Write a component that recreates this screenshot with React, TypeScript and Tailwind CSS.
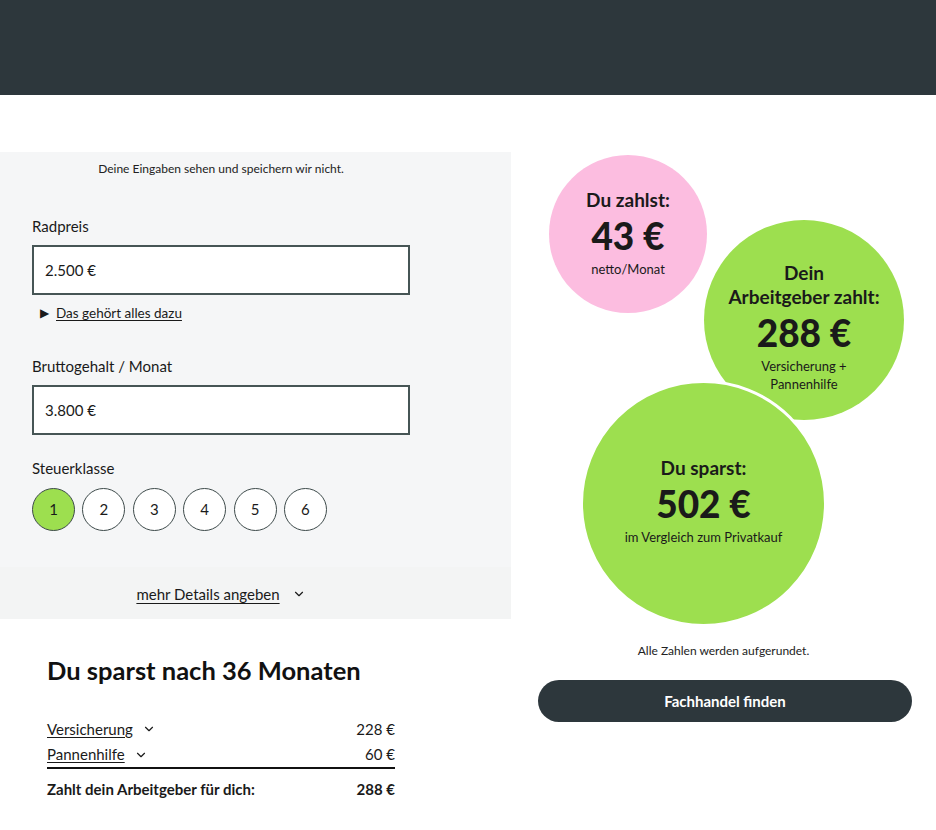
import { ChevronDown } from "lucide-react";

const font = { fontFamily: "Lato, 'Noto Sans', sans-serif" };

function Field({ label, value }: { label: string; value: string }) {
  return (
    <div>
      <div className="text-[15px] leading-5 text-[#1a1a1a]">{label}</div>
      <div className="mt-[9px] h-[50px] border-2 border-[#465555] bg-white flex items-center px-[11px] text-[15px] text-[#1a1a1a]">
        {value}
      </div>
    </div>
  );
}

function Bubble({
  title,
  amount,
  note,
}: {
  title: React.ReactNode;
  amount: string;
  note: React.ReactNode;
}) {
  return (
    <>
      <div className="text-[19px] leading-6 font-bold text-[#1a1a1a]">{title}</div>
      <div className="text-[37px] leading-[44px] font-black text-[#1a1a1a] mt-[2px]">{amount}</div>
      <div className="text-[13px] leading-[18px] text-[#1a1a1a] mt-[2px]">{note}</div>
    </>
  );
}

export default function App() {
  const classes = [1, 2, 3, 4, 5, 6];
  return (
    <div style={font} className="w-[936px] min-h-[830px] bg-white text-[#1a1a1a]">
      <div className="h-[95px] bg-[#2d373c]" />
      <div className="flex pt-[57px]">
        <div className="w-[511px]">
          <div className="bg-[#f5f6f7]">
            <div className="px-8 w-[442px] pt-[9px]">
              <p className="text-center text-[12px] leading-4 text-[#222]">
                Deine Eingaben sehen und speichern wir nicht.
              </p>
              <div className="mt-[39px]">
                <Field label="Radpreis" value="2.500 €" />
              </div>
              <div className="mt-[10px] flex items-center pl-[8px] text-[13.5px] leading-4">
                <span className="text-[12px] mr-[7px]">▶</span>
                <span className="underline underline-offset-2">Das gehört alles dazu</span>
              </div>
              <div className="mt-[35px]">
                <Field label="Bruttogehalt / Monat" value="3.800 €" />
              </div>
              <div className="mt-[23px] text-[15px] leading-5">Steuerklasse</div>
              <div className="mt-[10px] flex gap-[7.4px]">
                {classes.map((n) => (
                  <div
                    key={n}
                    className={
                      n === 1
                        ? "w-[43px] h-[43px] rounded-full border-[1.5px] border-[#3d4a4a] bg-[#9ddf4f] flex items-center justify-center text-[15px]"
                        : "w-[43px] h-[43px] rounded-full border-[1.5px] border-[#3d4a4a] bg-white flex items-center justify-center text-[15px]"
                    }
                  >
                    {n}
                  </div>
                ))}
              </div>
              <div className="h-[36px]" />
            </div>
            <div className="h-[52px] bg-[#f3f4f4] px-8 w-[511px]">
              <div className="w-[378px] h-full flex items-center justify-center gap-[12px] pt-[2px] text-[15px]">
                <span className="underline underline-offset-[3px]">mehr Details angeben</span>
                <ChevronDown size={14} strokeWidth={2} />
              </div>
            </div>
          </div>
          <div className="ml-[47px] w-[348px]">
            <h2 className="mt-[35px] text-[25.5px] leading-8 font-bold text-[#111]">
              Du sparst nach 36 Monaten
            </h2>
            <div className="mt-[30px] flex flex-col text-[15px]">
              <div className="flex justify-between items-center h-[26px]">
                <span className="flex items-center gap-[9px]">
                  <span className="underline underline-offset-2">Versicherung</span>
                  <ChevronDown size={14} strokeWidth={2} />
                </span>
                <span>228 €</span>
              </div>
              <div className="flex justify-between items-center h-[25px]">
                <span className="flex items-center gap-[9px]">
                  <span className="underline underline-offset-2">Pannenhilfe</span>
                  <ChevronDown size={14} strokeWidth={2} />
                </span>
                <span>60 €</span>
              </div>
              <div className="h-[2px] bg-[#111]" />
              <div className="flex justify-between items-center h-[40px] font-bold">
                <span>Zahlt dein Arbeitgeber für dich:</span>
                <span>288 €</span>
              </div>
            </div>
          </div>
        </div>
        <div className="flex-1">
          <div className="relative h-[488px]">
            <div className="absolute left-[38px] top-[3px] w-[158px] h-[158px] rounded-full bg-[#fcbde0] flex flex-col items-center justify-center pb-[2px]">
              <Bubble title="Du zahlst:" amount="43 €" note="netto/Monat" />
            </div>
            <div className="absolute left-[193px] top-[68px] w-[200px] h-[200px] rounded-full bg-[#9ddf4f] flex flex-col items-center justify-center pt-[14px]">
              <Bubble
                title={
                  <span className="block text-center">
                    Dein
                    <br />
                    Arbeitgeber zahlt:
                  </span>
                }
                amount="288 €"
                note={
                  <span className="block text-center">
                    Versicherung +
                    <br />
                    Pannenhilfe
                  </span>
                }
              />
            </div>
            <div className="absolute left-[69px] top-[228px] w-[247px] h-[247px] rounded-full bg-[#9ddf4f] border-[3px] border-white flex flex-col items-center justify-center pb-[6px]">
              <Bubble title="Du sparst:" amount="502 €" note="im Vergleich zum Privatkauf" />
            </div>
          </div>
          <p className="text-center text-[12px] leading-4 text-[#222] mt-[3px]">
            Alle Zahlen werden aufgerundet.
          </p>
          <button className="mt-[21px] ml-[27px] w-[374px] h-[42px] rounded-full bg-[#2d373c] text-white font-bold text-[15px]">
            Fachhandel finden
          </button>
        </div>
      </div>
    </div>
  );
}
